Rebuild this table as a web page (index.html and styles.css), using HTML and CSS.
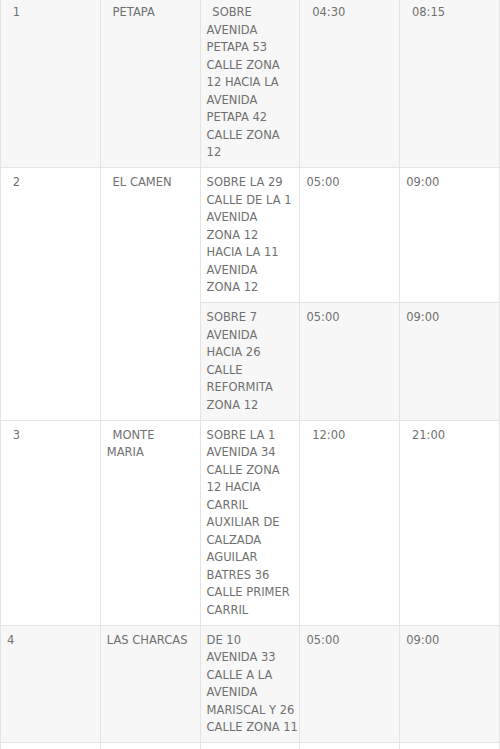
FILE: index.html
```html
<!DOCTYPE html>
<html lang="es">
<head>
<meta charset="utf-8">
<title>Horarios</title>
<link rel="stylesheet" href="styles.css">
</head>
<body>
<table class="schedule">
  <colgroup>
    <col class="c"><col class="c"><col class="c"><col class="c"><col class="c">
  </colgroup>
  <tbody>
    <tr>
      <td>&ensp;1</td>
      <td>&ensp;PETAPA</td>
      <td class="addr">&ensp;SOBRE<br>AVENIDA<br>PETAPA 53<br>CALLE ZONA<br>12 HACIA LA<br>AVENIDA<br>PETAPA 42<br>CALLE ZONA<br>12</td>
      <td>&ensp;04:30</td>
      <td>&ensp;08:15</td>
    </tr>
    <tr>
      <td rowspan="2">&ensp;2</td>
      <td rowspan="2">&ensp;EL CAMEN</td>
      <td class="addr">SOBRE LA 29<br>CALLE DE LA 1<br>AVENIDA<br>ZONA 12<br>HACIA LA 11<br>AVENIDA<br>ZONA 12</td>
      <td>05:00</td>
      <td>09:00</td>
    </tr>
    <tr>
      <td class="addr">SOBRE 7<br>AVENIDA<br>HACIA 26<br>CALLE<br>REFORMITA<br>ZONA 12</td>
      <td>05:00</td>
      <td>09:00</td>
    </tr>
    <tr>
      <td>&ensp;3</td>
      <td>&ensp;MONTE<br>MARIA</td>
      <td class="addr">SOBRE LA 1<br>AVENIDA 34<br>CALLE ZONA<br>12 HACIA<br>CARRIL<br>AUXILIAR DE<br>CALZADA<br>AGUILAR<br>BATRES 36<br>CALLE PRIMER<br>CARRIL</td>
      <td>&ensp;12:00</td>
      <td>&ensp;21:00</td>
    </tr>
    <tr>
      <td>4</td>
      <td>LAS CHARCAS</td>
      <td class="addr">DE 10<br>AVENIDA 33<br>CALLE A LA<br>AVENIDA<br>MARISCAL Y 26<br>CALLE ZONA 11</td>
      <td>05:00</td>
      <td>09:00</td>
    </tr>
    <tr>
      <td>&nbsp;</td>
      <td>&nbsp;</td>
      <td class="addr">&nbsp;</td>
      <td>&nbsp;</td>
      <td>&nbsp;</td>
    </tr>
  </tbody>
</table>
</body>
</html>
```

FILE: styles.css
```css
html, body {
  margin: 0;
  padding: 0;
  background: #ffffff;
}

.schedule {
  width: 100%;
  margin-top: -3px;
  border-collapse: collapse;
  table-layout: fixed;
  font-family: "DejaVu Sans", Verdana, sans-serif;
  font-size: 11.5px;
  line-height: 17.5px;
  color: #707070;
}

.schedule .c {
  width: 20%;
}

.schedule td {
  border: 1px solid #e4e4e4;
  padding: 6px 6px 5.5px 6px;
  vertical-align: top;
  text-align: left;
  background: #ffffff;
}

.schedule tr:nth-child(odd) td {
  background: #f7f7f7;
}

.schedule td.addr {
  white-space: nowrap;
}
```
